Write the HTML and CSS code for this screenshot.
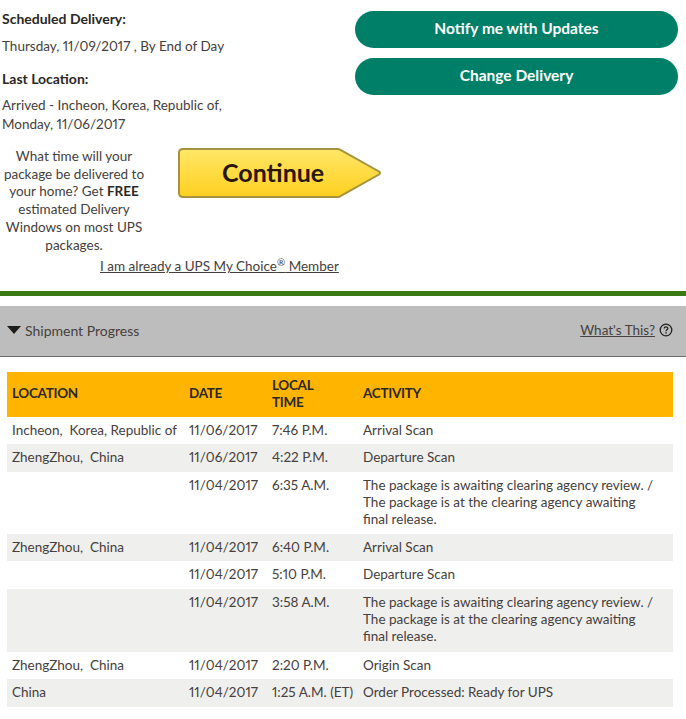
FILE: index.html
```html
<!DOCTYPE html>
<html lang="en">
<head>
  <meta charset="UTF-8" />
  <title>Shipment Progress</title>
  <link rel="stylesheet" href="styles.css">
</head>
<body>
  <div class="summary">
    <div class="details">
      <h3 class="label first">Scheduled Delivery:</h3>
      <p class="value">Thursday, 11/09/2017 , By End of Day</p>
      <h3 class="label">Last Location:</h3>
      <p class="value tight">Arrived - Incheon, Korea, Republic of,<br>Monday, 11/06/2017</p>
    </div>
    <div class="actions">
      <a class="pill">Notify me with Updates</a>
      <a class="pill">Change Delivery</a>
    </div>
  </div>

  <div class="promo">
    <p class="promo-text">What time will your package be delivered to your home? Get <b>FREE</b> estimated Delivery Windows on most UPS packages.</p>
    <a class="continue">
      <svg width="204" height="50" viewBox="0 0 204 50">
        <defs>
          <linearGradient id="gold" x1="0" y1="0" x2="0" y2="1">
            <stop offset="0" stop-color="#ffe768"/>
            <stop offset="1" stop-color="#ffd01f"/>
          </linearGradient>
        </defs>
        <path d="M5 1H160Q161 1 162 1.600L201 23.500Q203 25 201 26.500L162 48.400Q161 49 160 49H5Q1 49 1 45V5Q1 1 5 1Z" fill="url(#gold)" stroke="#a8923f" stroke-width="2"/>
      </svg>
      <span>Continue</span>
    </a>
  </div>
  <div class="member"><a>I am already a UPS My Choice<sup>®</sup> Member</a></div>

  <hr class="rule">

  <div class="bar">
    <div class="bar-title"><span class="arrow"></span>Shipment Progress</div>
    <div class="bar-help">
      <a>What's This?</a>
      <svg width="14" height="14" viewBox="0 0 14 14">
        <circle cx="7" cy="7" r="5.8" fill="none" stroke="#222" stroke-width="1.3"/>
        <path d="M5.2 5.6C5.2 3.4 8.8 3.4 8.8 5.5C8.8 6.8 7 6.8 7 8.2" fill="none" stroke="#222" stroke-width="1.3"/>
        <rect x="6.3" y="9.2" width="1.4" height="1.4" fill="#222"/>
      </svg>
    </div>
  </div>

  <table class="progress">
    <thead>
      <tr>
        <th class="c-loc">LOCATION</th>
        <th class="c-date">DATE</th>
        <th class="c-time">LOCAL<br>TIME</th>
        <th>ACTIVITY</th>
      </tr>
    </thead>
    <tbody>
      <tr class="h27">
        <td>Incheon,&nbsp; Korea, Republic of</td>
        <td>11/06/2017</td>
        <td class="time">7:46 P.M.</td>
        <td class="activity">Arrival Scan</td>
      </tr>
      <tr class="h28">
        <td>ZhengZhou,&nbsp; China</td>
        <td>11/06/2017</td>
        <td class="time">4:22 P.M.</td>
        <td class="activity">Departure Scan</td>
      </tr>
      <tr class="h62">
        <td></td>
        <td>11/04/2017</td>
        <td class="time">6:35 A.M.</td>
        <td class="activity">The package is awaiting clearing agency review. / The package is at the clearing agency awaiting final release.</td>
      </tr>
      <tr class="h27">
        <td>ZhengZhou,&nbsp; China</td>
        <td>11/04/2017</td>
        <td class="time">6:40 P.M.</td>
        <td class="activity">Arrival Scan</td>
      </tr>
      <tr class="h28">
        <td></td>
        <td>11/04/2017</td>
        <td class="time">5:10 P.M.</td>
        <td class="activity">Departure Scan</td>
      </tr>
      <tr class="h63">
        <td></td>
        <td>11/04/2017</td>
        <td class="time">3:58 A.M.</td>
        <td class="activity">The package is awaiting clearing agency review. / The package is at the clearing agency awaiting final release.</td>
      </tr>
      <tr class="h27">
        <td>ZhengZhou,&nbsp; China</td>
        <td>11/04/2017</td>
        <td class="time">2:20 P.M.</td>
        <td class="activity">Origin Scan</td>
      </tr>
      <tr class="h28">
        <td>China</td>
        <td>11/04/2017</td>
        <td class="time">1:25 A.M. (ET)</td>
        <td class="activity">Order Processed: Ready for UPS</td>
      </tr>
    </tbody>
  </table>
</body>
</html>
```

FILE: styles.css
```css
body {
  margin: 0;
  font-family: Lato, "Open Sans", sans-serif;
  font-size: 13.5px;
  font-variant-numeric: proportional-nums;
  color: #45403d;
  background: #fff;
}
a {
  color: inherit;
}

.summary {
  display: flex;
  justify-content: space-between;
  height: 148px;
  padding: 10px 8px 0 2px;
  box-sizing: border-box;
}
.label {
  margin: 0;
  font-size: 14px;
  font-weight: 700;
  line-height: 18px;
  color: #2b2826;
}
.label.first {
  margin-bottom: 9px;
}
.value {
  margin: 0 0 15px;
  line-height: 18px;
}
.value.tight {
  margin-top: 8px;
  line-height: 19px;
}
.actions {
  display: flex;
  flex-direction: column;
  gap: 10px;
  width: 323px;
  padding-top: 1px;
}
.pill {
  display: block;
  height: 37px;
  line-height: 35px;
  border-radius: 19px;
  background: #007f68;
  color: #fff;
  font-size: 15.5px;
  font-weight: 700;
  text-align: center;
}

.promo {
  display: flex;
  align-items: flex-start;
}
.promo-text {
  width: 148px;
  margin: 0;
  line-height: 17.7px;
  text-align: center;
}
.promo-text b {
  color: #2b2826;
}
.continue {
  position: relative;
  display: block;
  width: 204px;
  height: 50px;
  margin-left: 30px;
}
.continue svg {
  display: block;
}
.continue span {
  position: absolute;
  left: 44px;
  top: 7px;
  font-size: 25px;
  line-height: 34px;
  font-weight: 700;
  color: #2a1606;
}
.member {
  padding-left: 100px;
  margin-top: 3px;
  line-height: 18px;
}
.member a {
  text-decoration: underline;
}
.member sup {
  font-size: 10px;
  line-height: 0;
}

.rule {
  height: 5px;
  margin: 16px 0 10px;
  border: 0;
  background: #3b7a14;
}

.bar {
  display: flex;
  justify-content: space-between;
  align-items: center;
  height: 51px;
  box-sizing: border-box;
  padding: 0 13px 2px 7px;
  background: #bdbdbd;
  border-bottom: 1px solid #6e6e6e;
  color: #46413e;
}
.bar-title {
  display: flex;
  align-items: center;
  font-size: 14px;
}
.arrow {
  width: 0;
  height: 0;
  margin-right: 4px;
  border-top: 8px solid #1f1b19;
  border-left: 7px solid transparent;
  border-right: 7px solid transparent;
}
.bar-help {
  display: flex;
  align-items: center;
  gap: 4px;
}
.bar-help a {
  text-decoration: underline;
}
.bar-help svg {
  display: block;
}

.progress {
  width: 666px;
  margin: 15px 0 0 7px;
  border-collapse: collapse;
  table-layout: fixed;
}
.progress th {
  height: 45px;
  padding: 0 5px 2px;
  box-sizing: border-box;
  background: #ffb500;
  color: #2b2826;
  font-size: 13.5px;
  font-weight: 700;
  letter-spacing: -0.3px;
  line-height: 17px;
  text-align: left;
}
.c-loc {
  width: 177px;
}
.c-date {
  width: 83px;
}
.c-time {
  width: 91px;
}
.progress td {
  padding: 5px 5px 0;
  line-height: 17px;
  vertical-align: top;
}
.progress td.time {
  white-space: nowrap;
}
.progress td.activity {
  padding-right: 14px;
}
.progress tbody tr:nth-child(even) {
  background: #efefed;
}
.h27 {
  height: 27px;
}
.h28 {
  height: 28px;
}
.h62 {
  height: 62px;
}
.h63 {
  height: 63px;
}
```
